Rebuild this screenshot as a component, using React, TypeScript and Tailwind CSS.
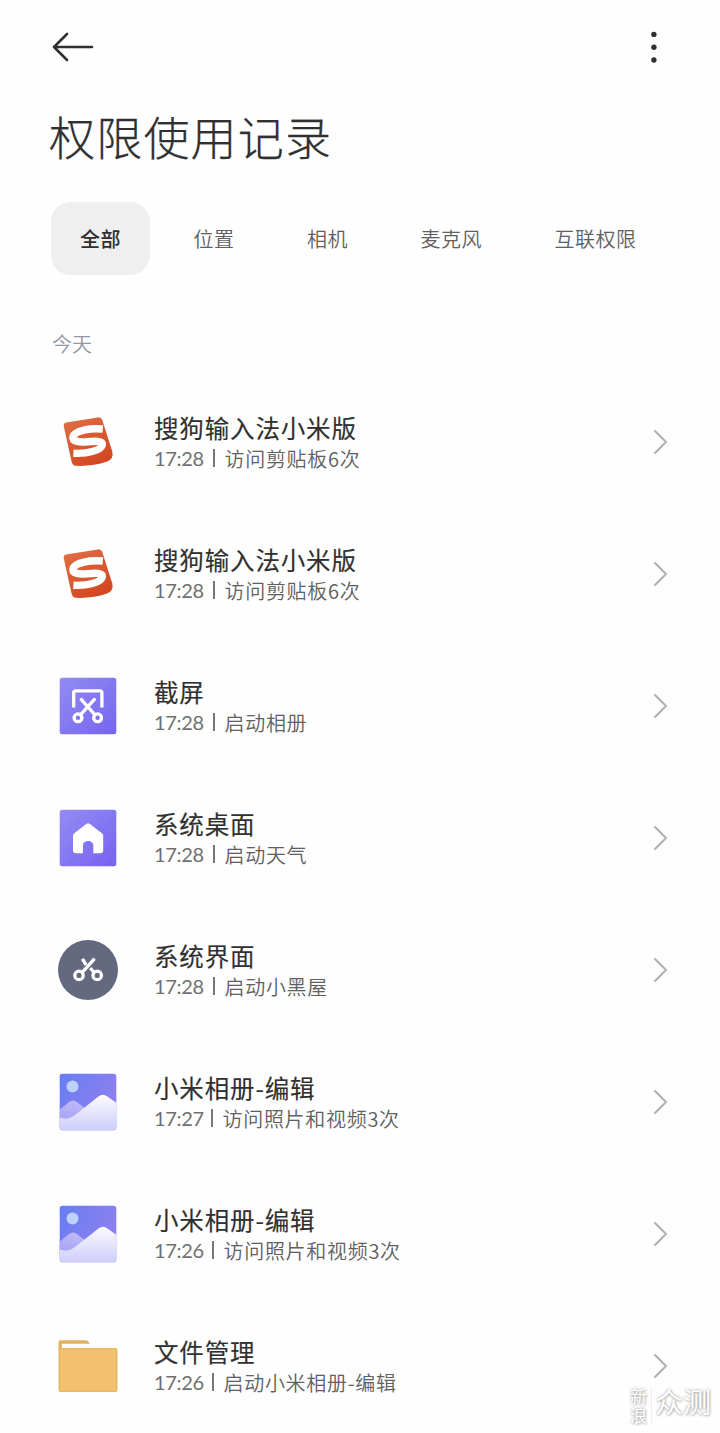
import React from 'react';

type IconName = 'sogou' | 'screenshot' | 'home' | 'scissors' | 'gallery' | 'folder';

interface PermissionRecord {
  id: number;
  icon: IconName;
  name: string;
  time: string;
  action: string;
  timeWidth: string;
}

const tabs = ['全部', '位置', '相机', '麦克风', '互联权限'];

const records: PermissionRecord[] = [
  { id: 1, icon: 'sogou', name: '搜狗输入法小米版', time: '17:28', action: '访问剪贴板6次', timeWidth: 'w-[49px]' },
  { id: 2, icon: 'sogou', name: '搜狗输入法小米版', time: '17:28', action: '访问剪贴板6次', timeWidth: 'w-[49px]' },
  { id: 3, icon: 'screenshot', name: '截屏', time: '17:28', action: '启动相册', timeWidth: 'w-[49px]' },
  { id: 4, icon: 'home', name: '系统桌面', time: '17:28', action: '启动天气', timeWidth: 'w-[49px]' },
  { id: 5, icon: 'scissors', name: '系统界面', time: '17:28', action: '启动小黑屋', timeWidth: 'w-[49px]' },
  { id: 6, icon: 'gallery', name: '小米相册-编辑', time: '17:27', action: '访问照片和视频3次', timeWidth: 'w-[47px]' },
  { id: 7, icon: 'gallery', name: '小米相册-编辑', time: '17:26', action: '访问照片和视频3次', timeWidth: 'w-[48px]' },
  { id: 8, icon: 'folder', name: '文件管理', time: '17:26', action: '启动小米相册-编辑', timeWidth: 'w-[48px]' },
];

const AppIcon: React.FC<{ name: IconName }> = ({ name }) => {
  switch (name) {
    case 'sogou':
      return (
        <svg width="60" height="60" viewBox="0 0 60 60">
          <defs>
            <linearGradient id="sogou" x1="0" y1="0" x2="0.6" y2="1">
              <stop offset="0" stopColor="#e07146" />
              <stop offset="1" stopColor="#d24822" />
            </linearGradient>
          </defs>
          <path d="M8 10.5 40 5.4Q43.3 5 44.3 8L54.3 39.5Q56 47 49 49.5Q35 54.5 18 53.8Q14.6 53.6 13.7 50L5.8 14.5Q5.2 11.2 8 10.5Z" fill="url(#sogou)" />
          <path d="M44.8 17C32 15.8 17 18.5 15 24.6C14 30 22 30.4 29 29.8C37 29 44.4 28.6 44.4 32.4C43.5 38.8 28 42 15.4 41.2" fill="none" stroke="#fff" strokeWidth="7.4" />
        </svg>
      );
    case 'screenshot':
      return (
        <svg width="60" height="60" viewBox="0 0 60 60">
          <defs>
            <linearGradient id="shot" x1="0" y1="0" x2="1" y2="1">
              <stop offset="0" stopColor="#918bf3" />
              <stop offset="1" stopColor="#7765ef" />
            </linearGradient>
          </defs>
          <rect x="1.7" y="1.7" width="56.6" height="56.6" rx="2.5" fill="url(#shot)" />
          <g fill="none" stroke="#fff" strokeWidth="3.3" strokeLinecap="round" strokeLinejoin="round">
            <path d="M15.7 31.5V16.8Q15.7 14.8 17.7 14.8H41.9Q43.9 14.8 43.9 16.8V31.5" strokeLinecap="butt" />
            <path d="M23.2 23.4 37 38.8M36.4 23.4 22.4 38.8" />
            <circle cx="20" cy="41.8" r="3.9" />
            <circle cx="39.6" cy="41.8" r="3.9" />
          </g>
        </svg>
      );
    case 'home':
      return (
        <svg width="60" height="60" viewBox="0 0 60 60">
          <defs>
            <linearGradient id="home" x1="0" y1="0" x2="1" y2="1">
              <stop offset="0" stopColor="#938cf4" />
              <stop offset="1" stopColor="#7662f0" />
            </linearGradient>
          </defs>
          <rect x="1.7" y="1.7" width="56.6" height="56.6" rx="2.5" fill="url(#home)" />
          <path d="M28.2 15.9Q30.1 14.4 32 15.9L44.2 25.4Q45.2 26.2 45.2 27.6V42.8Q45.2 45.2 42.8 45.2H35.3V37.6C35.3 31.4 24.9 31.4 24.9 37.6V45.2H17.4Q15 45.2 15 42.8V27.6Q15 26.2 16 25.4Z" fill="#fff" />
        </svg>
      );
    case 'scissors':
      return (
        <svg width="60" height="60" viewBox="0 0 60 60">
          <circle cx="30" cy="30" r="30" fill="#656980" />
          <g fill="none" stroke="#fff" strokeWidth="3.3">
            <circle cx="21" cy="35.4" r="4.2" />
            <circle cx="39.2" cy="35.4" r="4.2" />
            <path d="M36.6 18.6 24 32.6M24.4 18.8 28 24.8M32.2 28 36.4 32.6" />
          </g>
        </svg>
      );
    case 'gallery':
      return (
        <svg width="60" height="60" viewBox="0 0 60 60">
          <defs>
            <linearGradient id="sky" x1="0" y1="0" x2="1" y2="0.5">
              <stop offset="0" stopColor="#657df3" />
              <stop offset="1" stopColor="#8f80ee" />
            </linearGradient>
            <linearGradient id="hill" x1="0" y1="0" x2="0" y2="1">
              <stop offset="0" stopColor="#fcfbff" />
              <stop offset="1" stopColor="#cbcbfa" />
            </linearGradient>
            <linearGradient id="backHill" x1="0.6" y1="0" x2="0.3" y2="1">
              <stop offset="0" stopColor="#c0b9f8" />
              <stop offset="1" stopColor="#a6a2f5" />
            </linearGradient>
            <clipPath id="frame">
              <rect x="1.7" y="1.7" width="56.6" height="56.6" rx="2.5" />
            </clipPath>
          </defs>
          <g clipPath="url(#frame)">
            <rect width="60" height="60" fill="url(#sky)" />
            <circle cx="14.5" cy="14.6" r="6" fill="#bfd0fb" />
            <path d="M0 39 11 30Q15 27 19 30L28 37 10 50 0 50Z" fill="url(#backHill)" />
            <path d="M0 44.6C8 48.6 13 46.4 19 41.6L40.4 24.4Q45 21 49.4 24.4L60 32V60H0Z" fill="url(#hill)" />
          </g>
        </svg>
      );
    case 'folder':
      return (
        <svg width="60" height="60" viewBox="0 0 60 60">
          <path d="M.5 6.2Q.5 4.2 2.5 4.2H27.5Q30.2 4.2 31.8 7.8H3.8V14H.5Z" fill="#dfb262" />
          <path d="M.5 12H57.5Q59.5 12 59.5 14V54Q59.5 56 57.5 56H2.5Q.5 56 .5 54Z" fill="#e8b861" />
          <rect x="2.2" y="13.5" width="55.6" height="41" rx="1" fill="#f1c070" />
        </svg>
      );
  }
};

const RecordRow: React.FC<{ record: PermissionRecord }> = ({ record }) => (
  <li className="flex h-[132px] items-center pl-[58px] pr-[52px]">
    <AppIcon name={record.icon} />
    <div className="ml-9 flex-1 pt-px">
      <h3 className="h-[31px] whitespace-nowrap text-[24.5px] leading-[31px] tracking-[0.85px] text-[#303030] [-webkit-text-stroke:0.15px_#303030]">{record.name}</h3>
      <p className="flex h-[31px] items-center whitespace-nowrap text-[20px] font-[350] leading-[31px] text-[#606060]">
        <span className={`${record.timeWidth} font-['Lato',sans-serif] font-normal tracking-[-0.3px] text-[#707070]`}>{record.time}</span>
        <span className="ml-[10px] mr-[10px] h-[18px] w-[1.5px] bg-[#777777]" />
        <span className="pt-px tracking-[0.7px]">{record.action}</span>
      </p>
    </div>
    <svg width="16" height="26" viewBox="0 0 16 26" fill="none" stroke="#b0b0b0" strokeWidth="2">
      <path d="M2.5 1.5 14 13 2.5 24.5" />
    </svg>
  </li>
);

const App: React.FC = () => {
  return (
    <div className="relative h-[1433px] w-[720px] overflow-hidden bg-[#fefefe] font-['Noto_Sans_CJK_SC',sans-serif]">
      <header className="flex h-[94px] items-center justify-between pl-[52px] pr-[61px]">
        <button type="button" aria-label="返回">
          <svg width="42" height="30" viewBox="0 0 42 30" fill="none" stroke="#303030" strokeWidth="2.6" strokeLinecap="round" strokeLinejoin="round">
            <path d="M15 2 2 15 15 28M2 15H40" />
          </svg>
        </button>
        <button type="button" aria-label="更多">
          <svg width="10" height="32" viewBox="0 0 10 32" fill="#303030">
            <circle cx="4.9" cy="3.4" r="2.7" />
            <circle cx="4.9" cy="16.2" r="2.7" />
            <circle cx="4.9" cy="29" r="2.7" />
          </svg>
        </button>
      </header>

      <h1 className="h-[108px] pl-[49px] pt-[6px] text-[46px] font-light leading-[70px] tracking-[1.2px] text-[#303030] [-webkit-text-stroke:0.25px_#303030]">权限使用记录</h1>

      <nav className="flex h-[73px] gap-[14.5px] pl-[51px]">
        {tabs.map((tab, index) => (
          <button
            key={tab}
            type="button"
            className={`whitespace-nowrap rounded-[20px] px-[29px] pt-px text-[20px] tracking-[0.5px] ${index === 0 ? 'bg-[#efefef] font-medium text-[#303030]' : 'font-[350] text-[#606060]'}`}
          >
            {tab}
          </button>
        ))}
      </nav>

      <h2 className="h-[101px] pl-[52px] pt-[54px] text-[20px] font-[350] leading-[30px] text-[#9297a5]">今天</h2>

      <ul>
        {records.map(record => (
          <RecordRow key={record.id} record={record} />
        ))}
      </ul>

      {/* Watermark */}
      <div className="absolute bottom-[7px] right-[9px] flex items-center text-white [text-shadow:0_0_3px_#999999,1px_1px_2px_#cccccc]">
        <span className="w-[18px] break-all text-[17px] leading-[19px]">新浪</span>
        <span className="ml-[3px] h-[36px] w-px bg-[#eeeeee]" />
        <span className="ml-[3px] pb-[8px] text-[28px] leading-[34px]">众测</span>
      </div>
    </div>
  );
};

export default App;
